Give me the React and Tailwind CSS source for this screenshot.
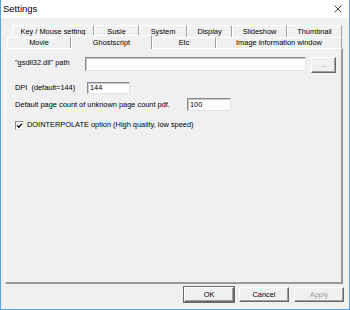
import React from "react";

const font = "font-['Liberation_Sans',Arial,sans-serif]";

const Tab = ({ label, w, selected }) => (
  <div
    className={`${w} flex items-center justify-center border-t border-l border-white border-r border-r-[#a0a0a0] ${
      selected ? "relative z-10 -mt-[2px] -mb-[1px] h-[14px] bg-[#f0f0f0]" : "h-full"
    }`}
  >
    <span className="leading-none whitespace-nowrap">{label}</span>
  </div>
);

const Button = ({ label, isDefault, disabled }) => (
  <button
    type="button"
    className={`w-[50px] h-[15px] flex items-center justify-center leading-none bg-[#f0f0f0] border-t border-l border-t-white border-l-white border-b border-r border-b-[#696969] border-r-[#696969] shadow-[inset_-1px_-1px_0_#a0a0a0] ${
      isDefault ? "outline outline-1 outline-[#6a6a6a]" : ""
    } ${disabled ? "text-[#a0a0a0]" : "text-black"}`}
  >
    {label}
  </button>
);

const Field = ({ w, h, value }) => (
  <div
    className={`${w} ${h} bg-white flex items-center pl-[2px] leading-none border-t border-l border-t-[#8a8a8a] border-l-[#8a8a8a] border-b border-r border-b-[#e3e3e3] border-r-[#e3e3e3] shadow-[inset_1px_1px_0_#c8c8c8]`}
  >
    {value}
  </div>
);

export default function App() {
  return (
    <div
      className={`${font} w-[350px] h-[310px] bg-[#f0f0f0] border-x border-b border-[#5aa2e8] flex flex-col text-[7.4px] text-black select-none`}
    >
      <div className="h-[18px] bg-white flex items-center justify-between pl-[2px] pr-[6px] shrink-0">
        <span className="text-[9.5px] leading-none">Settings</span>
        <svg width="8" height="8" viewBox="0 0 8 8" className="mr-[1px]">
          <path d="M0.5 0.5 L7.5 7.5 M7.5 0.5 L0.5 7.5" stroke="#333" strokeWidth="0.9" />
        </svg>
      </div>

      <div className="flex flex-col pt-[7px]">
        <div className="flex ml-[11px] h-[12px]">
          <Tab label="Key / Mouse setting" w="w-[82px]" />
          <Tab label="Susie" w="w-[45px]" />
          <Tab label="System" w="w-[48px]" />
          <Tab label="Display" w="w-[45px]" />
          <Tab label="Slideshow" w="w-[55px]" />
          <Tab label="Thumbnail" w="w-[55px]" />
        </div>
        <div className="flex ml-[6px] h-[11px]">
          <Tab label="Movie" w="w-[64px]" />
          <Tab label="Ghostscript" w="w-[81px]" selected />
          <Tab label="Etc" w="w-[64px]" />
          <Tab label="Image information window" w="w-[126px]" />
        </div>

        <div className="ml-[4px] w-[338px] h-[236px] border-t border-l border-white border-b-2 border-r-2 border-b-[#9a9a9a] border-r-[#9a9a9a] pl-[9px] pt-[8px]">
          <div className="flex items-start h-[16px]">
            <span className="w-[70px] mt-[2px] leading-none">"gsdll32.dll" path</span>
            <Field w="w-[221px]" h="h-[14px]" value="" />
            <button
              type="button"
              className="ml-[5px] w-[25px] h-[16px] flex items-center justify-center leading-none text-[#777] border-t border-l border-t-white border-l-white border-b border-r border-b-[#696969] border-r-[#696969] shadow-[inset_-1px_-1px_0_#a0a0a0]"
            >
              ...
            </button>
          </div>

          <div className="flex items-center mt-[9px] h-[12px]">
            <span className="w-[72px] leading-none">DPI&nbsp;&nbsp;(default=144)</span>
            <Field w="w-[43px]" h="h-[12px]" value="144" />
          </div>

          <div className="flex items-center mt-[4px] h-[13px]">
            <span className="w-[172px] leading-none">Default page count of unknown page count pdf.</span>
            <Field w="w-[44px]" h="h-[13px]" value="100" />
          </div>

          <div className="flex items-center mt-[9px] h-[10px]">
            <div className="w-[9px] h-[9px] bg-white border-t border-l border-t-[#8a8a8a] border-l-[#8a8a8a] border-b border-r border-b-[#e3e3e3] border-r-[#e3e3e3] flex items-center justify-center">
              <svg width="7" height="7" viewBox="0 0 7 7">
                <path d="M1 3.4 L2.8 5.2 L6 1.6" stroke="#000" strokeWidth="1.3" fill="none" />
              </svg>
            </div>
            <span className="ml-[3px] leading-none">DOINTERPOLATE option (High quality, low speed)</span>
          </div>
        </div>

        <div className="flex justify-end gap-[5px] mt-[3px] pr-[5px]">
          <Button label="OK" isDefault />
          <Button label="Cancel" />
          <Button label="Apply" disabled />
        </div>
      </div>
    </div>
  );
}
